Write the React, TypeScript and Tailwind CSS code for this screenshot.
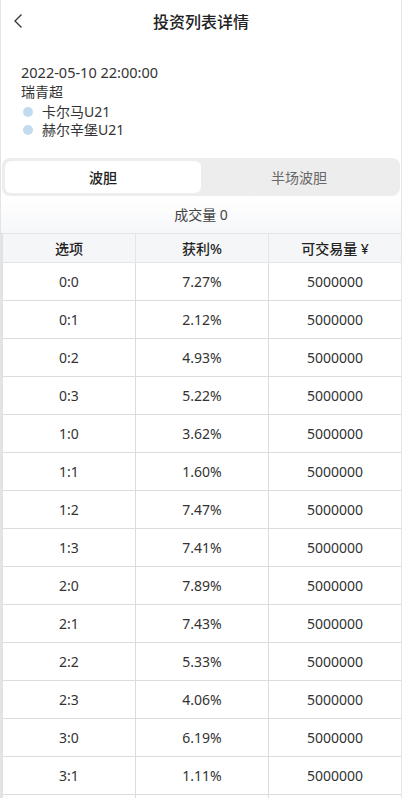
import React, { useState } from 'react';

const rows: [string, string][] = [
  ['0:0', '7.27%'],
  ['0:1', '2.12%'],
  ['0:2', '4.93%'],
  ['0:3', '5.22%'],
  ['1:0', '3.62%'],
  ['1:1', '1.60%'],
  ['1:2', '7.47%'],
  ['1:3', '7.41%'],
  ['2:0', '7.89%'],
  ['2:1', '7.43%'],
  ['2:2', '5.33%'],
  ['2:3', '4.06%'],
  ['3:0', '6.19%'],
  ['3:1', '1.11%'],
];

export default function App() {
  const [tab, setTab] = useState(0);
  const tabs = ['波胆', '半场波胆'];

  return (
    <div
      className="w-[402px] h-[798px] overflow-hidden bg-white text-[#333] border-x border-[#e4e4e4]"
      style={{ fontFamily: '"Noto Sans", "Noto Sans CJK SC", sans-serif' }}
    >
      {/* header */}
      <div className="relative h-[44px] flex items-center justify-center">
        <button className="absolute left-[12px] top-[12px] w-[14px] h-[18px] flex items-center">
          <svg width="10" height="16" viewBox="0 0 10 16" fill="none">
            <path d="M8.5 1.5 L2 8 L8.5 14.5" stroke="#333" strokeWidth="1.3" />
          </svg>
        </button>
        <h1 className="text-[16px] font-medium text-[#222]">投资列表详情</h1>
      </div>

      {/* match info */}
      <div className="pt-[18px] pb-[12px] px-[20px] text-[14px] leading-[20px]">
        <div className="text-[14.5px]">2022-05-10 22:00:00</div>
        <div>瑞青超</div>
        <div className="flex items-center gap-[9px] pl-[2px]">
          <span className="w-[10px] h-[10px] rounded-full bg-[#c3dbee]" />
          <span>卡尔马U21</span>
        </div>
        <div className="flex items-center gap-[9px] pl-[2px] -mt-[2px]">
          <span className="w-[10px] h-[10px] rounded-full bg-[#c3dbee]" />
          <span>赫尔辛堡U21</span>
        </div>
      </div>

      {/* tabs */}
      <div className="mx-[1px] mt-[6px] p-[3px] h-[38px] rounded-[8px] bg-[#ededed] flex text-[14px]">
        {tabs.map((t, i) => (
          <button
            key={t}
            onClick={() => setTab(i)}
            className={
              i === tab
                ? 'flex-1 rounded-[6px] bg-white font-medium text-[#222]'
                : 'flex-1 rounded-[6px] text-[#666]'
            }
          >
            {t}
          </button>
        ))}
      </div>

      <div className="h-[37px] flex items-center justify-center text-[14px] text-[#444] bg-gradient-to-b from-white to-[#f6f7f9]">
        成交量 0
      </div>

      {/* table */}
      <div className="border-l-2 border-[#e2e2e2] text-[14px]">
        <div className="grid grid-cols-[133px_133px_1fr] h-[30px] bg-[#f5f6f8] border-y border-[#e3e5ea] font-medium text-[#222]">
          <div className="flex items-center justify-center border-r border-[#e3e5ea]">选项</div>
          <div className="flex items-center justify-center border-r border-[#e3e5ea]">获利%</div>
          <div className="flex items-center justify-center">可交易量 ¥</div>
        </div>
        {rows.map(([score, pct]) => (
          <div key={score} className="grid grid-cols-[133px_133px_1fr] h-[38px] border-b border-[#dcdcdc]">
            <div className="flex items-center justify-center border-r border-[#dcdcdc]">{score}</div>
            <div className="flex items-center justify-center border-r border-[#dcdcdc]">{pct}</div>
            <div className="flex items-center justify-center">5000000</div>
          </div>
        ))}
        <div className="grid grid-cols-[133px_133px_1fr] h-[38px]">
          <div className="border-r border-[#dcdcdc]" />
          <div className="border-r border-[#dcdcdc]" />
          <div />
        </div>
      </div>
    </div>
  );
}
